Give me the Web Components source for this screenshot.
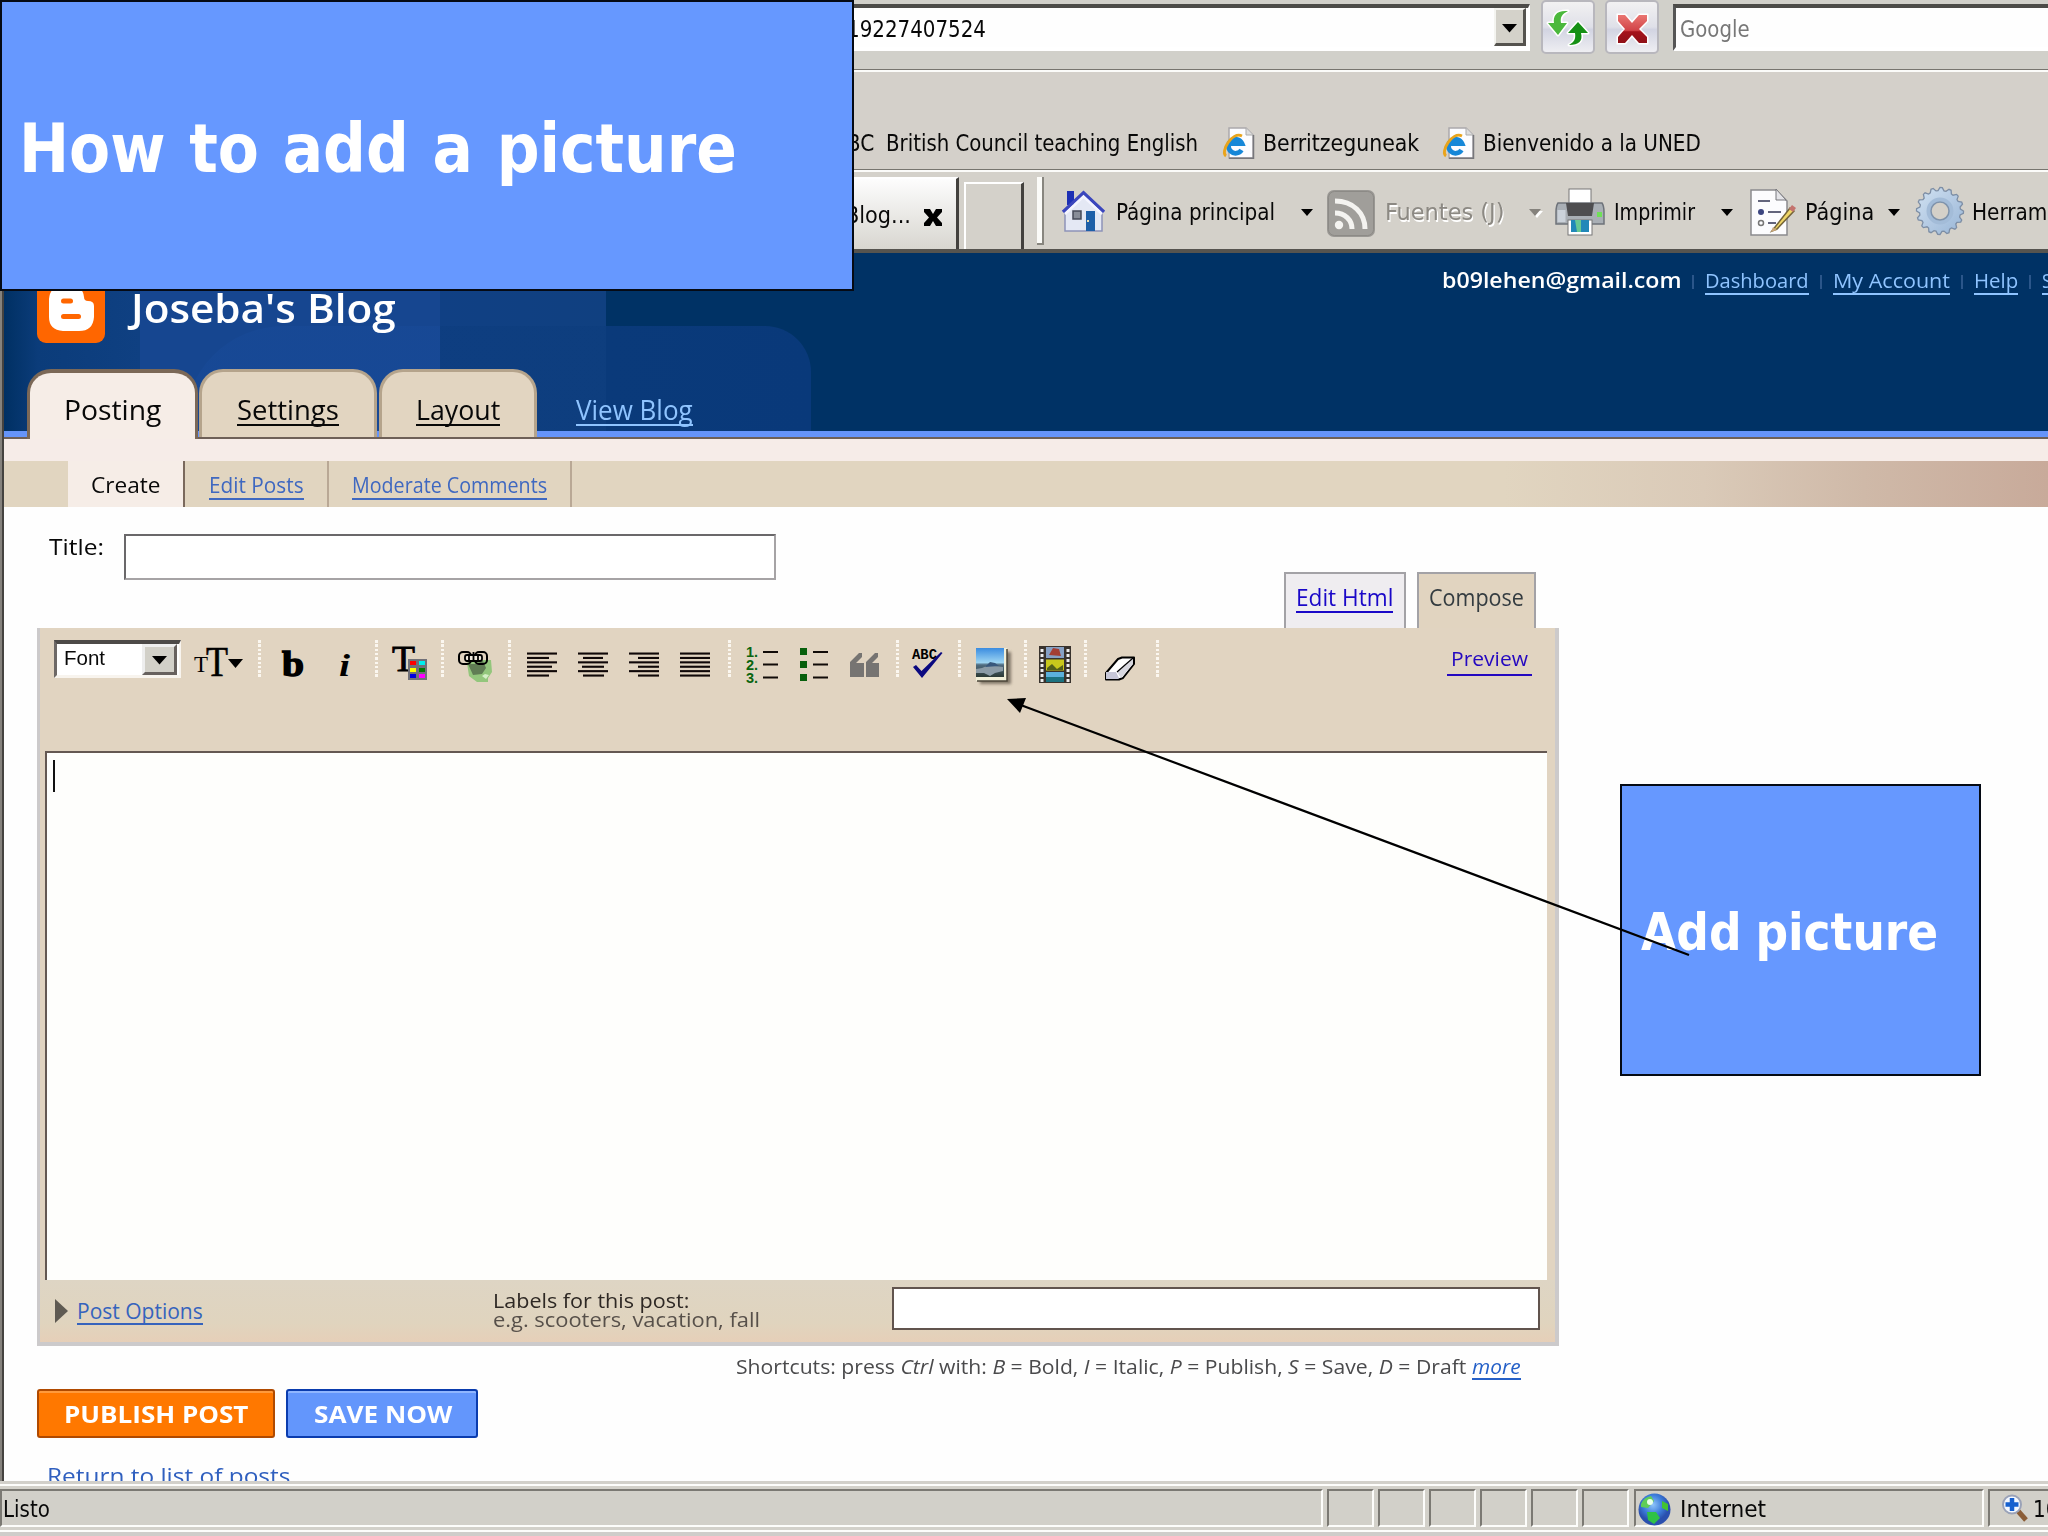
<!DOCTYPE html>
<html lang="es">
<head>
<meta charset="utf-8">
<title>Joseba's Blog</title>
<style>
html,body{margin:0;padding:0;background:#fefefe;overflow:hidden}
body{width:2048px;height:1536px;position:relative}
</style>
</head>
<body>
<slide-page></slide-page>
<script>
const define = (name, html, extra) => customElements.define(name, class extends HTMLElement {
  connectedCallback() {
    if (this.shadowRoot) return;
    this.attachShadow({mode: 'open'}).innerHTML = html;
    if (extra) extra(this, this.shadowRoot);
  }
});
const px = (el, prop, attr) => { if (el.hasAttribute(attr)) el.style[prop] = el.getAttribute(attr) + 'px'; };

/* One line of text fitted to a width. w: width, s: font size, b: baseline inside the row,
   g: gap before it, u: distance of the rule under the baseline, f: font face. */
const FACES = {
  ui: ['"DejaVu Sans Condensed","DejaVu Sans",sans-serif', .846],
  web: ['"Open Sans","Noto Sans",sans-serif', .888],
  arial: ['"Liberation Sans",sans-serif', .847]
};
define('fit-text', `<style>:host{display:block;flex:none;box-sizing:content-box}
span{display:inline-block;white-space:pre;transform-origin:0 0;line-height:1;vertical-align:top}</style><span><slot></slot></span>`,
(el, root) => {
  const s = +el.getAttribute('s'), w = +el.getAttribute('w');
  const [fam, k] = FACES[el.getAttribute('f') || 'ui'];
  el.style.font = `${el.getAttribute('wt') || 400} ${s}px/1 ${fam}`;
  el.style.width = w + 'px';
  el.style.height = s + 'px';
  px(el, 'marginLeft', 'g');
  px(el, 'wordSpacing', 'ws');
  el.style.marginTop = (+el.getAttribute('b') - k * s) + 'px';
  if (el.hasAttribute('u')) {
    el.style.height = (k * s + +el.getAttribute('u')) + 'px';
    el.style.borderBottom = '2px solid currentColor';
  }
  const span = root.querySelector('span');
  const fit = () => { span.style.transform = 'none'; const n = span.offsetWidth; if (n) span.style.transform = `scaleX(${w / n})`; };
  fit(); requestAnimationFrame(fit);
});

/* Icons: name, w, h, g (gap), t (top margin) */
const T = (x, y, size, extra, t) => `<text x="${x}" y="${y}" font-size="${size}" ${extra}>${t}</text>`;
const lines = (rows) => rows.map(([x, w], i) => `<rect x="${x}" y="${12.5 + i * 4.4}" width="${w}" height="2.1" fill="#100808"/>`).join('');
const IE = `<path d="M6 1H23L30 8V31H6Z" fill="#fcfcff" stroke="#aaa8ac" stroke-width="1.5"/><path d="M23 1V8H30" fill="#ddd" stroke="#aaa"/><path d="M6 31.2H30.5V8" fill="none" stroke="#77777c" stroke-width="1.5"/>
<path d="M18.500 23A7 7 0 1 1 19 16.500H7" fill="none" stroke="#1687d8" stroke-width="4.800"/><path d="M3 29C-3 25 9 4 19 9" fill="none" stroke="#e9a41c" stroke-width="2.800"/>`;
const gear = (() => { let p = ''; for (let i = 0; i < 64; i++) { const r = (i % 4 < 2) ? 23.500 : 20.500, a = i / 64 * 6.28318; p += (i ? 'L' : 'M') + (24 + r * Math.cos(a)).toFixed(1) + ' ' + (24 + r * Math.sin(a)).toFixed(1); } return p + 'Z'; })();
const holes = x => [9, 14, 19, 24, 29, 34, 39].map(y => `<rect x="${x}" y="${y}" width="3" height="3" fill="#eee"/>`).join('');
const ICONS = {
  ie: IE,
  down: `<path d="M0 0H12L6 7Z" fill="#000"/>`,
  drop: `<path d="M0 0H15L7.500 8.500Z" fill="#000"/>`,
  downoff: `<path d="M2 2H14L8 9Z" fill="#fff"/><path d="M0 0H12L6 7Z" fill="#85827c"/>`,
  close: `<path d="M0 0H6L9 5L12 0H18V3L13 8.500L18 14V17H12L9 12L6 17H0V14L5 8.500L0 3Z" fill="#000"/>`,
  refresh: `<g stroke="#fff" stroke-width="3" stroke-linejoin="round" paint-order="stroke"><path d="M27 10C15 9 12 15 13 22H7L17 34L26 22H20C19 16 21 13 27 10Z" fill="#4bb83c"/><path d="M28 44C38 44 42 40 40 32H47L37 21L27 32H34C35 38 33 41 28 44Z" fill="#159015"/></g>`,
  stop: `<defs><linearGradient id="r" x2="0" y2="1"><stop offset="0" stop-color="#ea7672"/><stop offset=".55" stop-color="#d14347"/><stop offset=".6" stop-color="#a5131b"/><stop offset="1" stop-color="#8f1018"/></linearGradient></defs><path d="M13 15H20L27 23L34 15H42V21L34 29L42 37V43H34L27 35L20 43H13V37L20 29L13 21Z" fill="url(#r)" stroke="#fff" stroke-width="3" paint-order="stroke"/>`,
  house: `<path d="M3 20L21 3L40 20V41H3Z" fill="#e4e8f4" stroke="#8d93b8" stroke-width="1.500"/><path d="M5 1H12V15H5Z" fill="#1c2fb4"/><path d="M1 22L21.500 3L42 22" fill="none" stroke="#3b46bd" stroke-width="3.500"/><path d="M3 24L21.500 6.500L40 24" fill="none" stroke="#f4f5ff" stroke-width="2.500"/><rect x="11" y="21" width="8" height="8" fill="#888d98" stroke="#454a58" stroke-width="1.500"/><rect x="24" y="21" width="9" height="20" fill="#1d5fa8"/><rect x="25" y="30" width="2" height="2" fill="#eda"/>`,
  rss: `<rect width="48" height="47" rx="7" fill="#9a9894"/><rect x="1.500" y="1.500" width="45" height="44" rx="6" fill="#a09e9a" stroke="#8c8a86"/><g fill="none" stroke="#f4f3f0" stroke-width="5"><path d="M8 23C18 23 25 30 25 39"/><path d="M8 11C26 11 38 23 38 39"/></g><circle cx="12" cy="35" r="4.200" fill="#f4f3f0"/>`,
  printer: `<rect x="14" y="1" width="22" height="18" fill="#fff" stroke="#777"/><path d="M3 15H47Q49 18 49 24V36H1V24Q1 18 3 15Z" fill="#a9afb5" stroke="#6e737a" stroke-width="1.500"/><path d="M11 15H39L37 28H13Z" fill="#4e4e50"/><rect x="2.500" y="22" width="8" height="12" fill="#cbd2da"/><rect x="42" y="24" width="5" height="5" fill="#70e058"/><rect x="13" y="32" width="24" height="15" fill="#fff" stroke="#777"/><rect x="16" y="32" width="18" height="12" fill="#2188b8"/><path d="M20 32H26V44H22Z" fill="#67c893"/>`,
  page: `<path d="M1 2H26L37 13V47H1Z" fill="#fcfcfe" stroke="#8a8a8e" stroke-width="1.500"/><path d="M26 1V12H36Z" fill="#e4e4e8" stroke="#77777c"/><path d="M8 13H20M18 24H31M18 35H26" stroke="#63657c" stroke-width="2"/><circle cx="11" cy="24" r="3" fill="#3c4580"/><circle cx="11" cy="35" r="2.500" fill="none" stroke="#777" stroke-width="1.500"/><path d="M22 43L40 20L44 23L27 41Z" fill="#f0d667" stroke="#75653a" stroke-width="1.500"/><path d="M39 21L42 17L46 20L43 24Z" fill="#c4736e"/><path d="M21 44L23 39L27 42Z" fill="#c9a77a"/>`,
  gear: `<defs><linearGradient id="g" x2="1" y2="1"><stop offset="0" stop-color="#d2e2f2"/><stop offset="1" stop-color="#98b5d6"/></linearGradient></defs><path d="${gear}" fill="url(#g)" stroke="#7d8ea5" stroke-width="1.300"/><circle cx="24" cy="24" r="11.500" fill="none" stroke="#a3bcd8" stroke-width="4"/><circle cx="24" cy="24" r="9" fill="#d4d0c8" stroke="#7f93ab" stroke-width="1.500"/>`,
  blogger: `<rect width="68" height="68" rx="9" fill="#f60"/><path d="M24 11H34Q46 11 47 22Q47 26 51 26Q57 26 57 31V42Q56 56 42 56H26Q12 55 12 42V24Q13 12 24 11Z" fill="#fff"/><rect x="24" y="23.500" width="12" height="5" rx="2.500" fill="#f60"/><rect x="24" y="39" width="20" height="5" rx="2.500" fill="#f60"/>`,
  size: `${T(0, 31.5, 24, 'textLength="14" lengthAdjust="spacingAndGlyphs"', 'T')}${T(12, 36, 42, 'textLength="22" lengthAdjust="spacingAndGlyphs" stroke="#000" stroke-width=".6"', 'T')}<path d="M34 19H49L41.500 28Z"/>`,
  bold: T(0, 36, 35, 'font-weight="bold" textLength="22" lengthAdjust="spacingAndGlyphs" stroke="#000" stroke-width="1.4"', 'b'),
  italic: T(1, 36, 31, 'font-weight="bold" font-style="italic" textLength="11" lengthAdjust="spacingAndGlyphs"', 'i'),
  color: `${T(0, 31, 35, 'textLength="23" lengthAdjust="spacingAndGlyphs" stroke="#000" stroke-width=".8"', 'T')}<rect x="16" y="19" width="19" height="21" fill="#707078"/><path d="M18 21H24V25H18Z" fill="#f00"/><path d="M27 21H33V25H27Z" fill="#0ee"/><path d="M18 28H24V32H18Z" fill="#ff0"/><path d="M27 28H33V32H27Z" fill="#070"/><path d="M18 34H24V38H18Z" fill="#00d"/><path d="M27 34H33V38H27Z" fill="#f0f"/>`,
  link: `<path d="M9 23L14 20H33L34 32L30 38V42H19L11 36Z" fill="#93c67c"/><path d="M10 24H17L25 21L28 28L24 34L15 35Z" fill="#607d54"/><path d="M24 36L27 34L31 35L28 39Z" fill="#d5efc6"/><g fill="none" stroke="#000" stroke-width="2"><rect x="1" y="12" width="12" height="12" rx="4"/><rect x="17" y="12" width="12" height="12" rx="4"/></g><rect x="7" y="15" width="17" height="6" rx="2" fill="#eee8dc" stroke="#000" stroke-width="1.800"/><path d="M11 15V21M15.500 12V21M20 15V21" stroke="#000" stroke-width="1.800"/>`,
  left: lines([[0, 30], [0, 22], [0, 30], [0, 25], [0, 30], [0, 22]]),
  center: lines([[0, 30], [5, 20], [0, 30], [4, 22], [0, 30], [5, 21]]),
  right: lines([[0, 30], [9, 21], [0, 30], [9, 21], [0, 30], [9, 21]]),
  justify: lines([[0, 30], [0, 30], [0, 30], [0, 30], [0, 30], [0, 30]]),
  ol: `<g fill="#0a650f" font-weight="bold" font-family="Liberation Sans,sans-serif">${T(0, 16.5, 14.500, '', '1.')}${T(0, 30, 14.500, '', '2.')}${T(0, 43, 14.500, '', '3.')}</g><path d="M17 12H32M17 24.500H32M17 37.500H32" stroke="#110b08" stroke-width="2.200"/>`,
  ul: `<path d="M0 8H7V15H0ZM0 21H7V28H0ZM0 34H7V41H0Z" fill="#075f0c"/><path d="M13 12H28M13 24.500H28M13 37.500H28" stroke="#110b08" stroke-width="2.200"/>`,
  quote: `<g fill="#767472"><path d="M0 37V22L9 13H12V17L6 23H14V37Z"/><path d="M16 37V22L25 13H28V17L22 23H29V37Z"/></g>`,
  spell: `<text x="0" y="18.500" font-size="15" style="font-family:'Liberation Mono',monospace" font-weight="bold" textLength="25" lengthAdjust="spacingAndGlyphs">ABC</text><path d="M1 27L4 25L9.500 31L29 12L30.500 13L10 38Z" fill="#0b0980"/>`,
  picture: `<defs><linearGradient id="s" x2="0" y2="1"><stop offset="0" stop-color="#3a8ce0"/><stop offset=".5" stop-color="#9cd4f2"/><stop offset=".58" stop-color="#506c80"/><stop offset="1" stop-color="#2c3a35"/></linearGradient><filter id="f"><feGaussianBlur stdDeviation="1.500"/></filter></defs><rect x="5" y="12" width="31" height="32" fill="#6b6052" opacity=".8" filter="url(#f)"/><rect x="1" y="8" width="31" height="33" fill="#f1efd8"/><path d="M32 9V41H2" fill="none" stroke="#4b4538" stroke-width="1.500"/><rect x="1" y="8" width="28" height="29" fill="url(#s)"/><path d="M1 29L7 28L14 25L20 26L28 27V31L20 33L15 36L9 33H1Z" fill="#8b9ba6"/><path d="M10 27L15 22L20 23L24 26Z" fill="#38587c"/>`,
  film: `<rect y="6" width="32" height="37" fill="#38322d"/>${holes(1.5)}${holes(27.5)}<rect x="7" y="7" width="18" height="11" fill="#86a0c4"/><path d="M10 15L14 8L20 9L22 16Z" fill="#a33e34"/><rect x="7" y="19.500" width="18" height="11" fill="#c9c81c"/><path d="M8 28L13 24L18 29L24 25V30H8Z" fill="#54601a"/><rect x="7" y="32" width="18" height="10" fill="#5bb0dc"/><rect x="7" y="37" width="18" height="5" fill="#1c7280"/>`,
  eraser: `<path d="M2 33L14 19L18 17.500H30V24L19 38L15 39.500H2Z" fill="#fff" stroke="#000" stroke-width="2" stroke-linejoin="round"/><path d="M2 32H12L15 38L14 39H2Z" fill="#c8c8d8"/><path d="M13 32L29 18V24L17 38Z" fill="#d8d8e0"/><path d="M13 32L29 18" stroke="#000" stroke-width="1.200"/>`,
  tri: `<path d="M0 0L13 12L0 24Z" fill="#5f5a52"/>`,
  globe: `<defs><radialGradient id="b" cx=".45" cy=".35"><stop offset="0" stop-color="#8fc4fa"/><stop offset=".6" stop-color="#3d7edb"/><stop offset="1" stop-color="#2a4fae"/></radialGradient></defs><circle cx="16.500" cy="16.500" r="16" fill="url(#b)"/><path d="M3 11Q6 4 13 3L16 8L10 15L3 14Z" fill="#5fce58"/><circle cx="12" cy="9" r="3" fill="#eaffea"/><path d="M24 8L30 11V18L24 15Z" fill="#43c332"/><path d="M9 19H18L22 25L16 31L10 27Z" fill="#2fc247"/>`,
  zoom: `<path d="M16 17L24 26" stroke="#8a5c36" stroke-width="5"/><circle cx="10" cy="10.500" r="9" fill="#f4f8ff" stroke="#9aa2b8" stroke-width="2"/><path d="M10 4V17M3.500 10.500H16.500" stroke="#1660cf" stroke-width="4.500"/>`
};
define('ui-icon', `<style>:host{display:block;flex:none}svg{display:block;overflow:visible}text{font-family:"Liberation Serif",serif}g text{font-family:inherit}</style><svg></svg>`, (el, root) => {
  const svg = root.querySelector('svg');
  svg.setAttribute('width', el.getAttribute('w'));
  svg.setAttribute('height', el.getAttribute('h') || 44);
  svg.innerHTML = ICONS[el.getAttribute('name')];
  px(el, 'marginLeft', 'g'); px(el, 'marginTop', 't');
});

/* Plain block with gap, top, width and height */
define('ui-box', `<style>:host{display:flex;flex:none;box-sizing:border-box;align-items:flex-start}</style><slot></slot>`, el => {
  px(el, 'marginLeft', 'g'); px(el, 'marginTop', 't'); px(el, 'width', 'w'); px(el, 'height', 'h');
});

const ROW = `*{flex-shrink:0}`;

define('address-row', `<style>${ROW}
:host{display:flex;align-items:flex-start;height:72px;box-sizing:border-box;background:#d1d0ca;border-bottom:2px solid #fbfbf9;box-shadow:inset 0 -1px #77756f}
.f{background:#fefefe;border:solid;border-width:4px 2px 4px 0;border-color:#5a5954 #fff #fff #404040;border-top-color:#4c4b48}
.b{background:#d4d2ca;border:2px solid;border-color:#f4f4f0 #55534e #55534e #f4f4f0;border-right-width:3px;border-bottom-width:3px}
.c{background:linear-gradient(#f2f1f2,#dfe0e8 50%,#d2d4e2 55%,#eeeef2);border:2px solid #b8b7bd;border-radius:5px}
</style>
<ui-box class="f" t="4" w="1530" h="47"><fit-text g="847" w="139" s="23.500" b="30">19227407524</fit-text><ui-box class="b" g="508" w="32" h="38"><ui-icon name="drop" w="15" h="9" g="6" t="14"></ui-icon></ui-box></ui-box>
<ui-box class="c" g="11" w="54" h="54"><ui-icon name="refresh" w="50" h="50" g="-2" t="-1"></ui-icon></ui-box>
<ui-box class="c" g="10" w="54" h="54"><ui-icon name="stop" w="50" h="50" g="-2" t="-2"></ui-icon></ui-box>
<ui-box class="f" g="14" t="4" w="380" h="47" style="border-left:3px solid #555"><fit-text g="4" w="70" s="23.500" b="30" style="color:#777">Google</fit-text></ui-box>`);

define('links-row', `<style>${ROW}
:host{display:flex;align-items:flex-start;height:100px;box-sizing:border-box;background:#d4d0ca;border-bottom:2px solid #fbfbf9;box-shadow:inset 0 -1px #77756f}</style>
<fit-text g="833" w="41" s="23.500" b="80">BBC</fit-text><fit-text g="12" w="312" s="23.500" b="80">British Council teaching English</fit-text>
<ui-icon name="ie" w="32" h="33" g="25" t="55"></ui-icon><fit-text g="8" w="156" s="23.500" b="80">Berritzeguneak</fit-text>
<ui-icon name="ie" w="32" h="33" g="24" t="55"></ui-icon><fit-text g="8" w="218" s="23.500" b="80">Bienvenido a la UNED</fit-text>`);

define('command-row', `<style>${ROW}
:host{display:flex;align-items:flex-start;height:81px;box-sizing:border-box;background:#d4d1ca;border-bottom:4px solid #56544f;overflow:hidden}
.tab{background:linear-gradient(#fdfdfd,#d8d6d0);border-top:2px solid #fff;border-right:3px solid #43413e}
.new{border:2px solid #fff;border-right:3px solid #43413e;border-bottom:0}
.sep{background:#fbfbf8;border-right:2px solid #88867f;border-bottom:2px solid #88867f}</style>
<ui-box class="tab" t="5" w="959" h="72"><fit-text g="845" w="66" s="23.500" b="45">Blog...</fit-text><ui-icon name="close" w="18" h="17" g="13" t="30"></ui-icon></ui-box>
<ui-box class="new" g="5" t="10" w="60" h="67"></ui-box>
<ui-box class="sep" g="13" t="5" w="7" h="68"></ui-box>
<ui-icon name="house" w="43" h="42" g="18" t="18"></ui-icon><fit-text g="11" w="159" s="23.500" b="48.500">Página principal</fit-text><ui-icon name="down" w="12" h="8" g="26" t="37"></ui-icon>
<ui-icon name="rss" w="48" h="47" g="14" t="18"></ui-icon><fit-text g="10" w="119" s="23.500" b="48.500" style="color:#8c8983;text-shadow:1px 2px #fff">Fuentes (J)</fit-text><ui-icon name="downoff" w="12" h="8" g="25" t="37"></ui-icon>
<ui-icon name="printer" w="50" h="48" g="14" t="16"></ui-icon><fit-text g="9" w="81" s="23.500" b="48.500">Imprimir</fit-text><ui-icon name="down" w="12" h="8" g="26" t="37"></ui-icon>
<ui-icon name="page" w="46" h="48" g="17" t="16"></ui-icon><fit-text g="9" w="69" s="23.500" b="48.500">Página</fit-text><ui-icon name="down" w="12" h="8" g="14" t="37"></ui-icon>
<ui-icon name="gear" w="48" h="48" g="16" t="15"></ui-icon><fit-text g="8" w="75" s="23.500" b="48.500">Herram</fit-text>`);

define('blog-header', `<style>${ROW}
:host{display:flex;flex-direction:column;height:186px;position:relative;background:
linear-gradient(90deg,#003063,#0b3c7a 34px,#0f4082 136px,#164690 136px,#164690 436px,#104084 436px,#104080 602px,transparent 602px) no-repeat,#003265;overflow:hidden}
.deco{position:absolute;left:180px;top:73px;width:627px;height:105px;border-radius:100px 46px 0 0;background:linear-gradient(90deg,rgba(24,74,152,.6) 256px,rgba(10,58,122,.35) 256px,rgba(10,58,122,.35) 422px,#0a3a7a 422px,#09397a)}
.r{display:flex;align-items:flex-start;position:relative}
.a{height:116px}.n{height:70px;background:linear-gradient(transparent 62px,#6594fa 62px,#6594fa 68px,#6e6058 68px)}
.s{background:#2b568a}
.t{border:3px solid #b5a48c;border-bottom:0;border-radius:24px 24px 0 0;background:#e2d5c1}
.on{border:4px solid #7b6857;border-left-width:3px;border-right-width:3px;border-bottom:0;background:#f6ede7}
.l{color:#8fc4ff}
</style><div class="deco"></div>
<div class="r a"><ui-icon name="blogger" w="68" h="68" g="33" t="22"></ui-icon><fit-text f="web" wt="600" g="26" w="265" s="40" b="70.500" style="color:#fff">Joseba's Blog</fit-text>
<fit-text f="web" wt="600" g="1046" w="240" s="22" b="35" style="color:#fff">b09lehen@gmail.com</fit-text><ui-box class="s" g="10" t="22" w="2" h="14"></ui-box>
<fit-text class="l" f="web" g="11" w="104" s="19.500" b="35" u="5">Dashboard</fit-text><ui-box class="s" g="11" t="22" w="2" h="14"></ui-box>
<fit-text class="l" f="web" g="11" w="117" s="19.500" b="35" u="5">My Account</fit-text><ui-box class="s" g="11" t="22" w="2" h="14"></ui-box>
<fit-text class="l" f="web" g="11" w="44" s="19.500" b="35" u="5">Help</fit-text><ui-box class="s" g="11" t="22" w="2" h="14"></ui-box>
<fit-text class="l" f="web" g="11" w="10" s="19.500" b="35" u="5">S</fit-text></div>
<div class="r n"><ui-box class="t on" g="23" w="171" h="70"><fit-text f="web" wt="500" g="34" w="97" s="28" b="47">Posting</fit-text></ui-box>
<ui-box class="t" g="1" w="178" h="68"><fit-text f="web" g="35" w="102" s="28" b="48" u="4">Settings</fit-text></ui-box>
<ui-box class="t" g="2" w="158" h="68"><fit-text f="web" g="34" w="84" s="28" b="48" u="4">Layout</fit-text></ui-box>
<fit-text class="l" f="web" g="39" w="117" s="28" b="51" u="4">View Blog</fit-text></div>`);

define('sub-nav', `<style>${ROW}
:host{display:flex;align-items:flex-start;height:68px;box-sizing:border-box;border-top:22px solid #f6ece8;background:linear-gradient(90deg,#e1d5c0 1500px,#dacab8 1700px,#cfb9a8 1860px,#c8aa9a);}
.c{background:#f6ede7;border-right:2px solid #7a695c}.s{background:#b9a895}.l{color:#3f68c0}</style>
<ui-box class="c" g="64" w="117" h="46"><fit-text f="web" wt="500" g="23" w="70" s="21" b="32.500">Create</fit-text></ui-box>
<fit-text class="l" f="web" g="24" w="95" s="21" b="32.500" u="4.500">Edit Posts</fit-text><ui-box class="s" g="23" w="2" h="46"></ui-box>
<fit-text class="l" f="web" g="23" w="195" s="21" b="32.500" u="4.500">Moderate Comments</fit-text><ui-box class="s" g="23" w="2" h="46"></ui-box>`);

define('title-row', `<style>${ROW}
:host{display:flex;align-items:flex-start;height:121px}
.i{background:#fff;border:2px solid #a6a3a5;border-top-color:#6a686a;border-left-color:#6a686a}
.t{border:2px solid #a3a2a6;border-bottom:0;background:#efedf0}.k{background:#e1d4c0}</style>
<fit-text f="web" wt="500" g="45" w="55" s="21" b="49">Title:</fit-text><ui-box class="i" g="20" t="27" w="652" h="46"></ui-box>
<ui-box class="t" g="508" t="65" w="122" h="56"><fit-text f="web" g="10" w="97" s="24" b="32" u="5" style="color:#1a08c8">Edit Html</fit-text></ui-box>
<ui-box class="t k" g="11" t="65" w="119" h="56"><fit-text f="web" g="10" w="95" s="24" b="32" style="color:#343c40">Compose</fit-text></ui-box>`);

define('tool-sep', `<style>:host{display:block;flex:none;width:3px;height:37px;margin-top:12px;background:repeating-linear-gradient(#fbf7f0 0 2.500px,transparent 2.500px 4.300px)}</style>`, el => px(el, 'marginLeft', 'g'));

define('tool-bar', `<style>${ROW}
:host{display:flex;align-items:flex-start;height:123px}
.s{background:#fff;border:solid;border-width:4px 2px 3px 3px;border-color:#4d4a48 #f8f4ee #f8f4ee #6d6866}
.b{background:#d2d0c8;border:3px solid;border-color:#eee #67615e #67615e #eee}
.p{border-bottom:2px solid #2408c0}</style>
<ui-box class="s" g="14" t="12" w="127" h="38"><fit-text f="arial" g="7" w="41" s="20" b="21">Font</fit-text><ui-box class="b" g="37" w="35" h="31"><ui-icon name="drop" w="15" h="9" g="7" t="9"></ui-icon></ui-box></ui-box>
<ui-icon name="size" w="50" g="13" t="12"></ui-icon><tool-sep g="14"></tool-sep>
<ui-icon name="bold" w="23" g="21" t="12"></ui-icon><ui-icon name="italic" w="14" g="33" t="12"></ui-icon><tool-sep g="23"></tool-sep>
<ui-icon name="color" w="36" g="14" t="12"></ui-icon><tool-sep g="13"></tool-sep>
<ui-icon name="link" w="36" g="14" t="12"></ui-icon><tool-sep g="14"></tool-sep>
<ui-icon name="left" w="31" g="16" t="12"></ui-icon><ui-icon name="center" w="31" g="20" t="12"></ui-icon><ui-icon name="right" w="31" g="20" t="12"></ui-icon><ui-icon name="justify" w="31" g="20" t="12"></ui-icon><tool-sep g="17"></tool-sep>
<ui-icon name="ol" w="33" g="15" t="12"></ui-icon><ui-icon name="ul" w="29" g="21" t="12"></ui-icon><ui-icon name="quote" w="30" g="21" t="12"></ui-icon><tool-sep g="16"></tool-sep>
<ui-icon name="spell" w="32" g="13" t="12"></ui-icon><tool-sep g="14"></tool-sep>
<ui-icon name="picture" w="38" g="14" t="12"></ui-icon><tool-sep g="11"></tool-sep>
<ui-icon name="film" w="32" g="12" t="12"></ui-icon><tool-sep g="13"></tool-sep>
<ui-icon name="eraser" w="34" g="17" t="12"></ui-icon><tool-sep g="18"></tool-sep>
<ui-box class="p" g="288" t="12" w="85" h="36"><fit-text f="web" g="4" w="77" s="20.500" b="26" style="color:#2408c0">Preview</fit-text></ui-box>`);

define('post-editor', `<style>${ROW}
:host{display:flex;flex-direction:column;box-sizing:border-box;margin-left:33px;width:1522px;height:718px;background:#e1d4c1;border:solid #cccacb;border-width:0 4px 4px 3px}
.area{background:#fefefc;border:solid #645852;border-width:2px 0 0 2px}
.cur{background:#111}.foot{display:flex;align-items:flex-start;height:62px;background:linear-gradient(#ded5c4,#e0d4be 70%,#e6cfb8)}
.col{display:flex;flex-direction:column;margin-left:290px;width:267px}.in{background:#fff;border:2px solid #61544e}</style>
<tool-bar></tool-bar>
<ui-box class="area" g="5" w="1502" h="529"><ui-box class="cur" g="6" t="7" w="2" h="32"></ui-box></ui-box>
<div class="foot"><ui-icon name="tri" w="13" h="24" g="15" t="19"></ui-icon><fit-text f="web" g="9" w="126" s="21" b="40" u="3.500" style="color:#3563bd">Post Options</fit-text>
<div class="col"><fit-text f="web" w="196" s="20" b="28.500" style="color:#2e2824">Labels for this post:</fit-text><fit-text f="web" w="267" s="20" b="17.300" style="color:#57504a">e.g. scooters, vacation, fall</fit-text></div>
<ui-box class="in" g="132" t="7" w="648" h="43"></ui-box></div>`);

define('post-actions', `<style>${ROW}
:host{display:flex;flex-direction:column;height:135px;overflow:hidden}
div{display:flex;align-items:flex-start}
.h{height:43px;color:#4a4a4c}.b{height:50px}.ret{height:42px}
.k{border:2px solid #b04a00;border-radius:3px;background:#ff7800;box-shadow:inset 0 2px #ff9a3c}
.v{border-color:#0a3cae;background:#6396fc;box-shadow:inset 0 2px #90b6ff}</style>
<div class="h"><fit-text f="web" g="732" w="730" s="20" b="29">Shortcuts: press <i>Ctrl</i> with: <i>B</i> = Bold, <i>I</i> = Italic, <i>P</i> = Publish, <i>S</i> = Save, <i>D</i> = Draft</fit-text><fit-text f="web" g="6" w="49" s="20" b="29" u="3.500" style="color:#2560c8"><i>more</i></fit-text></div>
<div class="b"><ui-box class="k" g="33" w="238" h="49"><fit-text f="web" wt="700" g="25" w="184" s="23.500" b="33" style="color:#fff">PUBLISH POST</fit-text></ui-box><ui-box class="k v" g="11" w="192" h="49"><fit-text f="web" wt="700" g="26" w="138" s="23.500" b="33" style="color:#fff">SAVE NOW</fit-text></ui-box></div>
<div class="ret"><fit-text f="web" g="43" w="243" s="22" b="45" style="color:#2f5fbf">Return to list of posts</fit-text></div>`);

define('status-bar', `<style>${ROW}
:host{display:flex;align-items:flex-start;height:55px;box-sizing:border-box;background:linear-gradient(#d2d0ca 3px,#fdfdfb 3px 5px,#d3d1ca 5px 49px,#fdfdfb 49px 51px,#cfcdca 51px);overflow:hidden}
.p{background:#d2d0c9;border:2px solid;border-color:#7b7973 #fdfdfb #fdfdfb #7b7973;margin-top:8px}</style>
<ui-box class="p" t="8" w="1323" h="38"><fit-text g="1" w="47" s="23" b="26">Listo</fit-text></ui-box>
${'<ui-box class="p" g="4" t="8" w="47" h="38"></ui-box>'.repeat(6)}
<ui-box class="p" g="5" t="8" w="350" h="38"><ui-icon name="globe" w="33" h="33" g="2" t="2"></ui-icon><fit-text g="9" w="86" s="23" b="26">Internet</fit-text></ui-box>
<ui-box class="p" g="4" t="8" w="100" h="38"><ui-icon name="zoom" w="26" h="28" g="12" t="3"></ui-icon><fit-text g="5" w="25" s="23" b="26">10</fit-text></ui-box>`);

/* Callout drawn over the page, at its own place on the slide */
define('slide-note', `<style>:host{display:flex;align-items:flex-start;position:absolute;box-sizing:border-box;background:#6698ff;border:2px solid #050a14;color:#fff}</style><slot></slot>`);

define('slide-page', `<style>
:host{display:flex;flex-direction:column;width:2048px;height:1536px;position:relative;overflow:hidden;color:#080808}
main{display:flex;flex-direction:column;height:1228px;box-sizing:border-box;border-left:2px solid #85827d;flex:none;background:#fefefe}
.in{border-left:2px solid #454340;display:flex;flex-direction:column;height:1228px;overflow:hidden}
.in>*,:host>*{flex-shrink:0}
svg{position:absolute;left:0;top:0}
</style>
<address-row></address-row><links-row></links-row><command-row></command-row>
<main><div class="in"><blog-header></blog-header><sub-nav></sub-nav><title-row></title-row><post-editor></post-editor><post-actions></post-actions></div></main>
<status-bar></status-bar>
<slide-note style="left:0;top:0;width:854px;height:291px"><fit-text wt="700" g="17" w="718" s="68" b="171" ws="3">How to add a picture</fit-text></slide-note>
<slide-note style="left:1620px;top:784px;width:361px;height:292px"><fit-text wt="700" g="19" w="297" s="51.500" b="165" ws="-2">Add picture</fit-text></slide-note>
<svg width="2048" height="1536"><path d="M1018 704L1689 955" stroke="#000" stroke-width="2.200"/><path d="M1007 699L1026 698L1020 713Z"/></svg>`);
</script>
</body>
</html>
